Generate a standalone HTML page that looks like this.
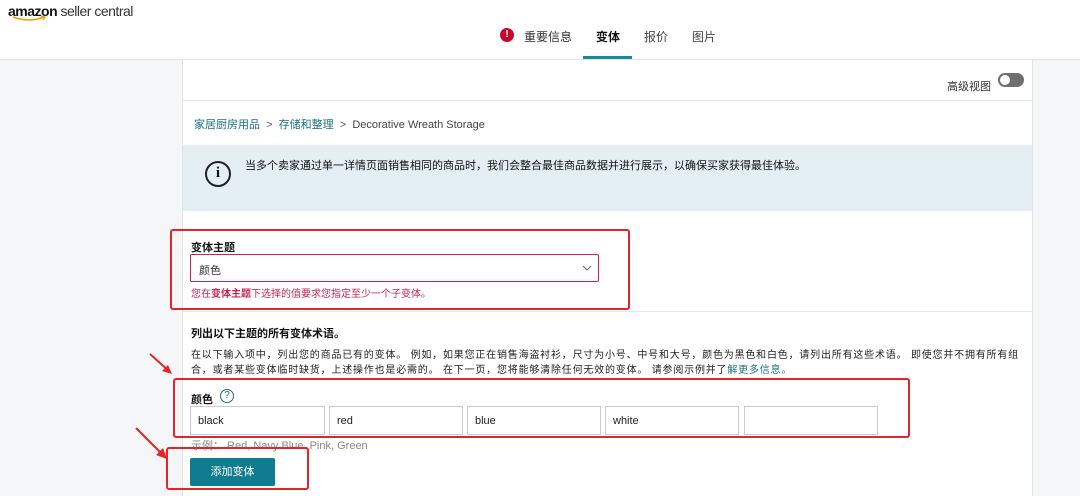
<!DOCTYPE html>
<html><head><meta charset="utf-8"><style>
*{margin:0;padding:0;box-sizing:border-box}
body{width:1080px;height:496px;overflow:hidden;background:#fff;font-family:"Liberation Sans","Noto Sans CJK SC",sans-serif;position:relative;color:#111}
.a{position:absolute}
.cn{font-size:11px}
</style></head><body>
<div class="a" style="left:8px;top:3px;font-size:14px;letter-spacing:-0.5px"><b style="color:#111">amazon</b> <span style="color:#333">seller central</span></div>
<svg class="a" style="left:12px;top:15px" width="36" height="8"><path d="M1 2 Q17 8 32 2" stroke="#f90" stroke-width="1.6" fill="none"/><path d="M29 1 L33 2 L31 5" stroke="#f90" stroke-width="1.3" fill="none"/></svg>
<div class="a" style="left:500px;top:28px;width:14px;height:14px;border-radius:50%;background:#c40a2a;color:#fff;font-size:10px;font-weight:bold;text-align:center;line-height:14px">!</div>
<div class="a cn" style="left:524px;top:28px;font-size:12px;color:#333">重要信息</div>
<div class="a cn" style="left:596px;top:28px;font-size:12px;font-weight:bold;color:#111">变体</div>
<div class="a" style="left:583px;top:56px;width:49px;height:3px;background:#1a8a9a"></div>
<div class="a cn" style="left:644px;top:28px;font-size:12px;color:#444">报价</div>
<div class="a cn" style="left:692px;top:28px;font-size:12px;color:#444">图片</div>
<div class="a" style="left:0;top:59px;width:1080px;height:437px;background:#f5f6f7;border-top:1px solid #e2e4e5"></div>
<div class="a" style="left:182px;top:60px;width:851px;height:436px;background:#fff;border-left:1px solid #e3e3e3;border-right:1px solid #e3e3e3"></div>
<div class="a" style="left:182px;top:100px;width:851px;height:1px;background:#e7e7e7"></div>
<div class="a cn" style="left:947px;top:78px;font-size:11px;color:#333">高级视图</div>
<div class="a" style="left:998px;top:73px;width:26px;height:14px;border-radius:7px;background:#6f6f6f"><div style="position:absolute;left:2px;top:2px;width:10px;height:10px;border-radius:50%;background:#fff"></div></div>
<div class="a cn" style="left:194px;top:116px;color:#1c6f80">家居厨房用品 <span style="color:#555">&nbsp;&gt;&nbsp;</span> 存储和整理 <span style="color:#555">&nbsp;&gt;&nbsp;</span> <span style="color:#444">Decorative Wreath Storage</span></div>
<div class="a" style="left:183px;top:145px;width:849px;height:66px;background:#e3eff3"></div>
<div class="a" style="left:205px;top:161px;width:26px;height:26px;border-radius:50%;border:2.5px solid #222;text-align:center;font:bold 15px/21px 'Liberation Serif',serif">i</div>
<div class="a cn" style="left:245px;top:157px;color:#111">当多个卖家通过单一详情页面销售相同的商品时，我们会整合最佳商品数据并进行展示，以确保买家获得最佳体验。</div>
<div class="a" style="left:182px;top:311px;width:851px;height:1px;background:#e7e7e7"></div>
<div class="a cn" style="left:191px;top:239px;font-weight:bold">变体主题</div>
<div class="a" style="left:190px;top:254px;width:409px;height:28px;border:1px solid #c6244f;border-radius:2px"></div>
<div class="a cn" style="left:199px;top:262px;color:#333">颜色</div>
<svg class="a" style="left:582px;top:264px" width="10" height="8"><path d="M1 2 L5 6 L9 2" stroke="#666" fill="none"/></svg>
<div class="a cn" style="left:191px;top:285px;font-size:10px;color:#c6244f">您在<b>变体主题</b>下选择的值要求您指定至少一个子变体。</div>
<div class="a" style="left:170px;top:229px;width:460px;height:81px;border:2px solid #e0262a;border-radius:3px"></div>
<div class="a cn" style="left:191px;top:325px;font-weight:bold">列出以下主题的所有变体术语。</div>
<div class="a" style="left:191px;top:348px;width:880px;white-space:nowrap;font-size:10px;line-height:15px;letter-spacing:0.8px;color:#222">在以下输入项中，列出您的商品已有的变体。 例如，如果您正在销售海盗衬衫，尺寸为小号、中号和大号，颜色为黑色和白色，请列出所有这些术语。 即使您并不拥有所有组<br>合，或者某些变体临时缺货，上述操作也是必需的。 在下一页，您将能够清除任何无效的变体。 请参阅示例并了<span style="color:#1c6f80">解更多信息。</span></div>
<div class="a cn" style="left:191px;top:391px;font-weight:bold">颜色</div>
<div class="a" style="left:220px;top:389px;width:14px;height:14px;border-radius:50%;border:1.5px solid #1c6f80;color:#1c6f80;font-size:10px;text-align:center;line-height:11px">?</div>
<div class="a cn" style="left:191px;top:437px;color:#888">示例： Red, Navy Blue, Pink, Green</div>
<div class="a" style="left:190px;top:406px;width:135px;height:29px;border:1px solid #ccc;font-size:11px;padding:8px 7px;color:#222;background:#fff">black</div>
<div class="a" style="left:329px;top:406px;width:134px;height:29px;border:1px solid #ccc;font-size:11px;padding:8px 7px;color:#222;background:#fff">red</div>
<div class="a" style="left:467px;top:406px;width:134px;height:29px;border:1px solid #ccc;font-size:11px;padding:8px 7px;color:#222;background:#fff">blue</div>
<div class="a" style="left:605px;top:406px;width:134px;height:29px;border:1px solid #ccc;font-size:11px;padding:8px 7px;color:#222;background:#fff">white</div>
<div class="a" style="left:744px;top:406px;width:134px;height:29px;border:1px solid #ccc;background:#fff"></div>
<div class="a" style="left:173px;top:378px;width:737px;height:60px;border:2px solid #e0262a;border-radius:3px"></div>
<div class="a cn" style="left:190px;top:458px;width:85px;height:28px;background:#0f7c8f;border-radius:2px;color:#fff;text-align:center;line-height:28px">添加变体</div>
<div class="a" style="left:166px;top:447px;width:143px;height:43px;border:2px solid #e0262a;border-radius:3px"></div>
<svg class="a" style="left:130px;top:350px" width="50" height="140"><path d="M20 4 L40 22" stroke="#e0262a" stroke-width="2"/><path d="M42 24 L32 21 L38 15 Z" fill="#e0262a"/><path d="M6 78 L34 106" stroke="#e0262a" stroke-width="2"/><path d="M37 109 L26 105 L33 98 Z" fill="#e0262a"/></svg>
</body></html>
